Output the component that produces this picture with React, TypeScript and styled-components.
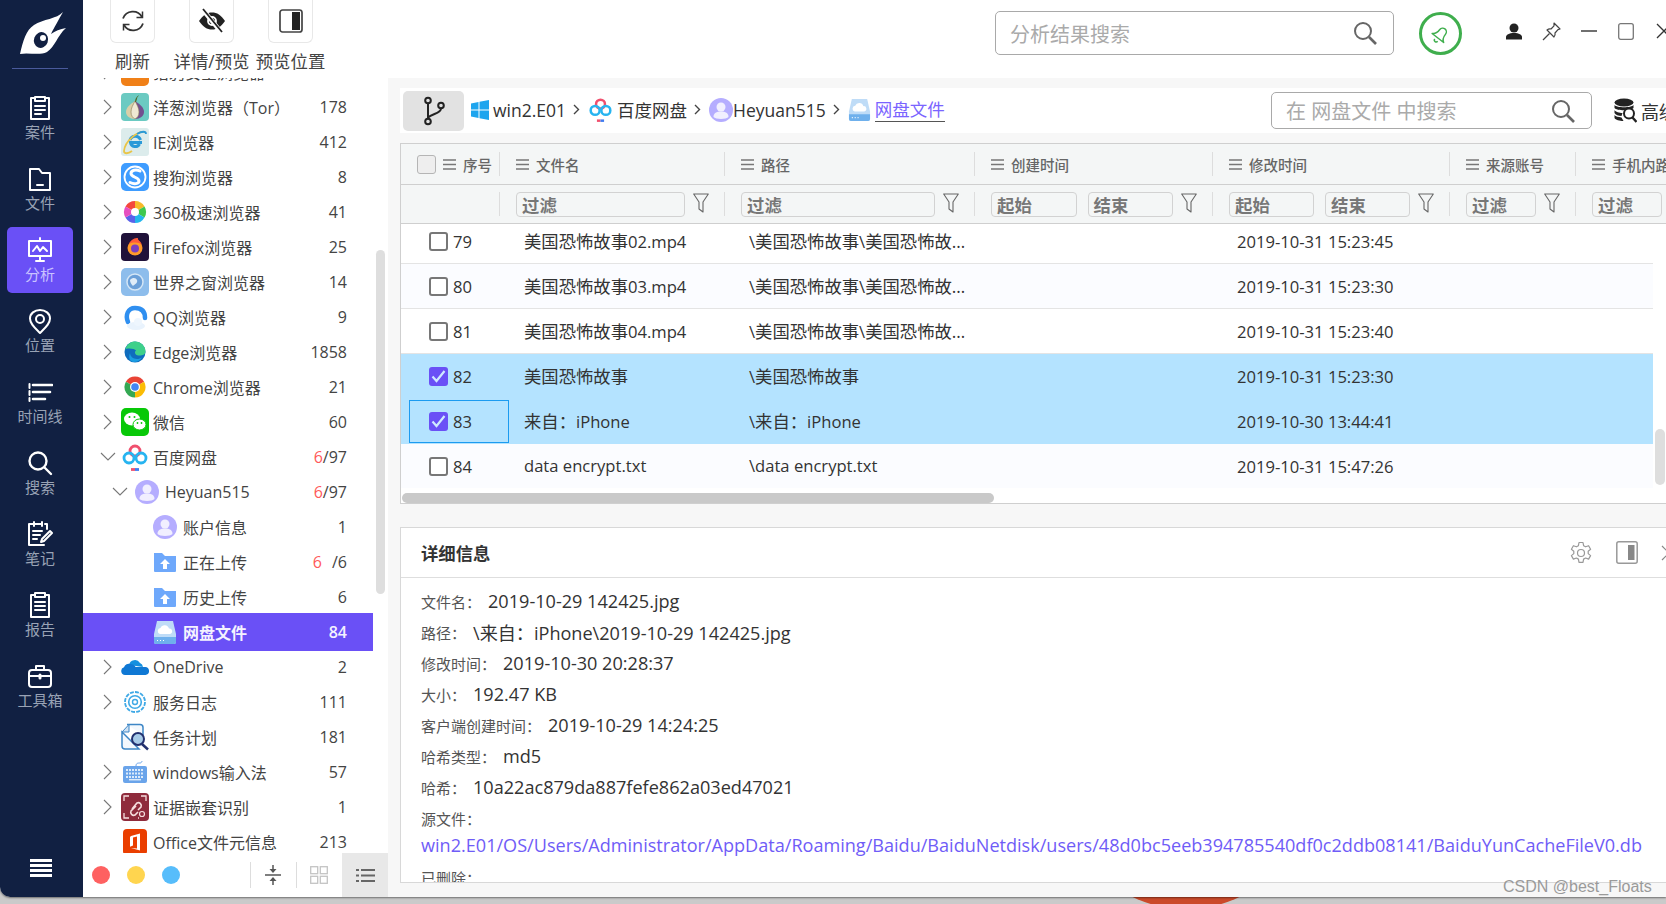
import React from "react";
import styled, { createGlobalStyle } from "styled-components";

const Global = createGlobalStyle`
  html, body { margin: 0; padding: 0; width: 1666px; height: 904px; overflow: hidden; background: #cacaca; }
  body { font-family: "Open Sans", "Noto Sans CJK SC", sans-serif; color: #333; }
  #root { width: 1666px; height: 904px; }
  * { box-sizing: border-box; }
`;

const Page = styled.div`
  position: relative;
  width: 1666px;
  height: 904px;
  overflow: hidden;
  background: #cacaca;
`;
const BehindWindow = styled.div`
  position: absolute;
  left: 1059px;
  top: 655px;
  width: 254px;
  height: 254px;
  border-radius: 50%;
  background: #cb4a2a;
`;
const Window = styled.div`
  position: relative;
  display: flex;
  width: 1666px;
  height: 897px;
  background: #fff;
  border-bottom-left-radius: 10px;
  box-shadow: 0 1px 2px rgba(0, 0, 0, 0.45);
  overflow: hidden;
`;
const Rail = styled.nav`
  flex: none;
  width: 83px;
  display: flex;
  flex-direction: column;
  background: #112042;
`;
const LogoBox = styled.div`
  width: 83px;
  height: 69px;
  display: flex;
  justify-content: center;
  padding-top: 11px;
  position: relative;
  &::after {
    content: "";
    position: absolute;
    left: 12px;
    right: 15px;
    bottom: 0;
    height: 1px;
    background: #4a5a9c;
  }
`;
const RailList = styled.div`
  display: flex;
  flex-direction: column;
  gap: 5px;
  padding: 16px 0 0 7px;
`;
const RailItem = styled.div<{ $active?: boolean }>`
  width: 66px;
  height: 66px;
  border-radius: 5px;
  display: flex;
  flex-direction: column;
  align-items: center;
  justify-content: center;
  gap: 2px;
  font-size: 15px;
  line-height: 19px;
  color: ${(p) => (p.$active ? "#c9c2ff" : "#99a3b5")};
  background: ${(p) => (p.$active ? "#6a50f6" : "transparent")};
`;
const Burger = styled.div`
  margin: auto 0 20px 30px;
  width: 22px;
  height: 18px;
  display: flex;
  flex-direction: column;
  justify-content: space-between;
  & > i {
    display: block;
    height: 3px;
    background: #fff;
  }
`;
const Content = styled.div`
  flex: 1;
  min-width: 0;
  display: flex;
  flex-direction: column;
`;
const TopBar = styled.header`
  flex: none;
  height: 78px;
  display: flex;
  padding-left: 10px;
  background: #fff;
`;
const ToolItem = styled.div`
  flex: none;
  width: 79px;
  display: flex;
  flex-direction: column;
  align-items: center;
  font-size: 17.4px;
  line-height: 24px;
  color: #444;
  white-space: nowrap;
`;
const ToolButton = styled.div`
  width: 45px;
  height: 43px;
  margin-bottom: 6px;
  border: 1px solid #e8e8e8;
  border-top: none;
  border-radius: 0 0 6px 6px;
  display: flex;
  align-items: center;
  justify-content: center;
`;
const TopSearch = styled.div`
  flex: none;
  margin: 11px 0 0 665px;
  width: 399px;
  height: 44px;
  border: 1px solid #a9a9a9;
  border-radius: 5px;
  display: flex;
  align-items: center;
  justify-content: space-between;
  padding: 0 16px 0 14px;
  font-size: 20px;
  color: #aaa;
`;
const BellCircle = styled.div`
  flex: none;
  margin: 12px 0 0 25px;
  width: 43px;
  height: 43px;
  border-radius: 50%;
  border: 3px solid #3fae4d;
  display: flex;
  align-items: center;
  justify-content: center;
`;
const WinControls = styled.div`
  flex: none;
  margin: 12px 0 0 33px;
  height: 38px;
  display: flex;
`;
const WinSlot = styled.div`
  flex: none;
  width: 37.5px;
  display: flex;
  align-items: center;
  justify-content: center;
`;
const Body = styled.div`
  flex: 1;
  min-height: 0;
  display: flex;
`;
const TreePanel = styled.aside`
  position: relative;
  flex: none;
  width: 305px;
  display: flex;
  flex-direction: column;
  background: #fff;
`;
const TreeList = styled.div`
  flex: 1;
  min-height: 0;
  overflow: hidden;
  width: 290px;
`;
const TreeTopClip = styled.div`
  margin-top: -23.5px;
`;
const TreeRow = styled.div<{ $level: number; $selected?: boolean }>`
  height: ${(p) => (p.$selected ? 38 : 35)}px;
  margin: ${(p) => (p.$selected ? "-1.5px 0" : "0")};
  display: flex;
  align-items: center;
  padding-left: ${(p) => [20, 32, 70][p.$level]}px;
  padding-right: 26px;
  padding-bottom: 1px;
  font-size: 16px;
  color: ${(p) => (p.$selected ? "#f4f2ff" : "#444")};
  font-weight: ${(p) => (p.$selected ? 600 : 400)};
  background: ${(p) => (p.$selected ? "#6a50f6" : "transparent")};
  position: relative;
`;
const Chevron = styled.span<{ $level: number }>`
  flex: none;
  width: ${(p) => (p.$level === 0 ? 18 : p.$level === 1 ? 20 : 0)}px;
  display: flex;
  align-items: center;
`;
const OpenChevron = styled.svg`
  margin-left: -3px;
`;
const IconSlot = styled.span<{ $small?: boolean }>`
  flex: none;
  width: ${(p) => (p.$small ? 24 : 28)}px;
  height: ${(p) => (p.$small ? 24 : 28)}px;
  margin-right: ${(p) => (p.$small ? 6 : 4)}px;
  display: flex;
`;
const TreeLabel = styled.span`
  flex: 1;
  white-space: nowrap;
`;
const Count = styled.span`
  flex: none;
  font-size: 16px;
`;
const Red = styled.span<{ $gap?: boolean }>`
  color: #ff5a5a;
  margin-right: ${(p) => (p.$gap ? 10 : 0)}px;
`;
const TreeThumb = styled.div`
  position: absolute;
  left: 293px;
  top: 172px;
  width: 9px;
  height: 344px;
  border-radius: 5px;
  background: #dedede;
`;
const TreeFooter = styled.div`
  flex: none;
  height: 44px;
  display: flex;
  align-items: center;
  padding-left: 9px;
`;
const Dot = styled.span<{ $c: string }>`
  flex: none;
  width: 18px;
  height: 18px;
  border-radius: 50%;
  margin-right: 17px;
  background: ${(p) => p.$c};
`;
const FooterTool = styled.div<{ $active?: boolean; $sep?: boolean }>`
  flex: none;
  height: 44px;
  width: 46px;
  display: flex;
  align-items: center;
  justify-content: center;
  position: relative;
  background: ${(p) => (p.$active ? "#e8e8e8" : "transparent")};
  ${(p) =>
    p.$sep
      ? `&::before { content: ""; position: absolute; left: 0; top: 9px; bottom: 9px; width: 1px; background: #ddd; }`
      : ""}
`;
const FooterSpacer = styled.div`
  width: 53px;
`;
const Main = styled.main`
  flex: none;
  width: 1278px;
  padding: 10px 0 14px 12px;
  display: flex;
  flex-direction: column;
  background: #f7f7f7;
`;
const CrumbBar = styled.div`
  flex: none;
  height: 45px;
  display: flex;
  align-items: center;
  background: #fff;
  white-space: nowrap;
`;
const Crumbs = styled.div`
  flex: none;
  width: 871px;
  padding: 0 0 2px 3px;
  display: flex;
  align-items: center;
  font-size: 17.5px;
  color: #333;
`;
const BranchButton = styled.div`
  flex: none;
  width: 61px;
  height: 40px;
  margin: 2px 7px 0 0;
  border-radius: 5px;
  background: #e2e2e2;
  display: flex;
  align-items: center;
  justify-content: center;
`;
const CrumbSep = styled.span`
  display: flex;
  margin: 0 8px 0 7px;
`;
const CrumbIcon = styled.span`
  display: flex;
  margin-right: 4px;
`;
const CrumbLink = styled.span`
  color: #7a64ff;
  border-bottom: 1px solid #555;
  line-height: 24px;
`;
const CrumbSearch = styled.div`
  flex: none;
  width: 321px;
  height: 37px;
  border: 1px solid #a9a9a9;
  border-radius: 5px;
  display: flex;
  align-items: center;
  justify-content: space-between;
  padding: 0 16px 0 14px;
  font-size: 20px;
  color: #aaa;
`;
const Advanced = styled.div`
  flex: none;
  margin-left: 22px;
  display: flex;
  align-items: center;
  gap: 4px;
  font-size: 18px;
  color: #333;
`;
const Table = styled.section`
  position: relative;
  flex: none;
  height: 361px;
  margin-top: 10px;
  background: #fff;
  border: 1px solid #cfcfcf;
  border-right: none;
  overflow: hidden;
`;
const gridCols = "99px 225px 250px 238px 237px 126px 126px";
const HeaderRow = styled.div`
  display: grid;
  grid-template-columns: ${gridCols};
  height: 41px;
  background: #f4f6f6;
  border-bottom: 1px solid #cfcfcf;
  font-size: 14.5px;
  font-weight: 500;
  color: #666;
  white-space: nowrap;
`;
const FilterRow = styled.div`
  display: grid;
  grid-template-columns: ${gridCols};
  height: 39px;
  background: #f4f6f6;
  border-bottom: 1px solid #cfcfcf;
`;
const HeadCell = styled.div`
  position: relative;
  display: flex;
  align-items: center;
  gap: 7px;
  padding-left: 16px;
  &::after {
    content: "";
    position: absolute;
    right: 0;
    top: 8px;
    height: 24px;
    width: 1px;
    background: #ddd;
  }
`;
const FilterCell = styled.div`
  position: relative;
  display: flex;
  align-items: center;
  gap: 8px;
  padding: 0 16px;
  &::after {
    content: "";
    position: absolute;
    right: 0;
    top: 7px;
    height: 24px;
    width: 1px;
    background: #ddd;
  }
`;
const FilterBox = styled.div`
  flex: 1;
  min-width: 0;
  height: 25px;
  border: 1px solid #d2d2d2;
  border-radius: 4px;
  padding-left: 5px;
  display: flex;
  align-items: center;
  font-size: 17.4px;
  font-weight: 700;
  color: #777;
  & + & {
    margin-left: 3px;
  }
`;
const HeadCheck = styled.span`
  flex: none;
  width: 19px;
  height: 19px;
  border-radius: 3px;
  border: 1px solid #b5b5b5;
  background: #eeeeee;
`;
const RowsClip = styled.div`
  width: 1252px;
  height: 264px;
  overflow: hidden;
`;
const RowsInner = styled.div`
  margin-top: -5px;
`;
const DataRow = styled.div<{ $selected?: boolean; $alt?: boolean }>`
  display: grid;
  grid-template-columns: ${gridCols};
  height: 45px;
  align-items: center;
  font-size: 17.33px;
  color: #333;
  white-space: nowrap;
  background: ${(p) => (p.$selected ? "#b4e3ff" : p.$alt ? "#fbfcff" : "#fff")};
  border-bottom: 1px solid ${(p) => (p.$selected ? "#b4e3ff" : "#e4e4e4")};
`;
const IndexCell = styled.div<{ $focus?: boolean }>`
  display: flex;
  align-items: center;
  gap: 5px;
  height: 43px;
  padding-left: ${(p) => (p.$focus ? 19 : 28)}px;
  margin-left: ${(p) => (p.$focus ? 8 : 0)}px;
  width: ${(p) => (p.$focus ? "100px" : "auto")};
  border: ${(p) => (p.$focus ? "1px solid #1c9bf0" : "none")};
`;
const Check = styled.span<{ $on?: boolean }>`
  flex: none;
  width: 19px;
  height: 19px;
  border-radius: 3px;
  display: flex;
  align-items: center;
  justify-content: center;
  border: ${(p) => (p.$on ? "none" : "2px solid #777")};
  background: ${(p) => (p.$on ? "#6a50f6" : "#fff")};
`;
const Cell = styled.div`
  padding: 0 5px 2px 24px;
  overflow: hidden;
  text-overflow: ellipsis;
`;
const TimeCell = styled(Cell)`
  padding-bottom: 0;
`;
const Latin = styled.span`
  font-size: 16.6px;
`;
const HScroll = styled.div`
  height: 15px;
  padding: 5px 0 0 1px;
`;
const HThumb = styled.div`
  width: 592px;
  height: 10px;
  border-radius: 5px;
  background: #c9c9c9;
`;
const VThumb = styled.div`
  position: absolute;
  left: 1254px;
  top: 285px;
  width: 10px;
  height: 56px;
  border-radius: 5px;
  background: #dedede;
`;
const Detail = styled.section`
  flex: 1;
  min-height: 0;
  margin-top: 23px;
  background: #fff;
  border: 1px solid #d8d8d8;
  border-right: none;
  overflow: hidden;
`;
const DetailHead = styled.div`
  height: 50px;
  border-bottom: 1px solid #dedede;
  display: flex;
  align-items: center;
  padding-left: 20px;
  font-size: 17.33px;
  font-weight: 700;
  color: #333;
`;
const DetailActions = styled.div`
  margin-left: auto;
  margin-right: -11px;
  display: flex;
  align-items: center;
  gap: 23px;
`;
const DetailBody = styled.div`
  padding: 7.5px 0 0 20px;
`;
const InfoLine = styled.div`
  height: 31px;
  display: flex;
  align-items: center;
  gap: 7px;
  white-space: nowrap;
  font-size: 18.1px;
  color: #333;
`;
const InfoLabel = styled.span`
  font-size: 15px;
  color: #555;
`;
const PathLink = styled.div`
  height: 25px;
  line-height: 25px;
  margin: -1px 0 4px;
  font-size: 18.08px;
  white-space: nowrap;
  color: #6f5cf7;
`;
const Watermark = styled.div`
  position: absolute;
  left: 1503px;
  top: 877px;
  font-family: "Liberation Sans", sans-serif;
  font-size: 16px;
  line-height: 20px;
  color: #9a9a9a;
  white-space: nowrap;
`;
const FunnelSvg = styled.svg`
  flex: none;
  margin-top: -3px;
`;

type SvgP = React.SVGProps<SVGSVGElement>;
const Railsvg = (p: SvgP) => (
  <svg width="26" height="26" viewBox="0 0 26 26" fill="none" stroke="#fff" strokeWidth="2" strokeLinecap="round" strokeLinejoin="round" {...p} />
);

const Logo = () => (
  <svg width="50" height="46" viewBox="0 0 50 46">
    <path
      fill="#fff"
      d="M46 1 C40 8 26 8 17 14 C9 19 6 30 3 43 C12 41 22 45 30 41 C38 36 40 25 49 17 C43 18 38 20 34 23 C37 17 42 8 46 1Z"
    />
    <ellipse cx="24" cy="29" rx="7" ry="8" transform="rotate(20 24 29)" fill="#112042" />
    <circle cx="26" cy="27" r="3" fill="#fff" />
  </svg>
);

const railIcons: Record<string, React.ReactNode> = {
  case: (
    <Railsvg>
      <path d="M8 3H4v21h18V3h-4" />
      <path d="M8 2h10v4H8z" />
      <path d="M8 11h10M8 15h10M8 19h6" />
    </Railsvg>
  ),
  file: (
    <Railsvg>
      <path d="M3 3h9l3 4h8v17H3z" />
      <path d="M10 19h6" />
    </Railsvg>
  ),
  analyse: (
    <Railsvg>
      <path d="M2 4h22v15H2z" />
      <path d="M13 1v3M13 19v4M9 24h8" />
      <path d="M6 14l4-5 3 5 3-4 4 4" />
    </Railsvg>
  ),
  location: (
    <Railsvg>
      <path d="M13 25C8 20 3 16 3 10.5 3 5.5 7.5 2 13 2s10 3.500 10 8.500C23 16 18 20 13 25z" />
      <circle cx="13" cy="11" r="4" />
    </Railsvg>
  ),
  timeline: (
    <Railsvg strokeWidth="2.6">
      <path d="M2.500 5v17" strokeWidth="2" strokeDasharray="4 3" />
      <path d="M6 6h19M6 13h17M6 20h12" />
    </Railsvg>
  ),
  search: (
    <Railsvg strokeWidth="2.4">
      <circle cx="11" cy="11" r="8.500" />
      <path d="M17.500 17.500L24 24" />
    </Railsvg>
  ),
  note: (
    <Railsvg>
      <path d="M7 3H2v21h15" />
      <path d="M7 1v4M15 1v4M7 3h8M18 3h2v5" />
      <path d="M6 10h9M6 14h7M6 18h4" />
      <path d="M14 21l1-3 8-8 2 2-8 8z" />
    </Railsvg>
  ),
  report: (
    <Railsvg>
      <path d="M8 3H4v22h18V3h-4" />
      <path d="M8 1h10v4H8z" />
      <path d="M8 10h10M8 14h10M8 18h10" />
    </Railsvg>
  ),
  tools: (
    <Railsvg>
      <rect x="2" y="7" width="22" height="17" rx="3" />
      <path d="M9 7V3h8v4M2 13h22" />
      <path d="M13 12v3" strokeWidth="3" />
    </Railsvg>
  ),
};

const Chev = ({ open }: { open?: boolean }) =>
  open ? (
    <OpenChevron width="16" height="9" viewBox="0 0 16 9" fill="none" stroke="#777" strokeWidth="1.100">
      <path d="M1 1l7 7 7-7" />
    </OpenChevron>
  ) : (
    <svg width="9" height="16" viewBox="0 0 9 16" fill="none" stroke="#777" strokeWidth="1.100">
      <path d="M1 1l7 7-7 7" />
    </svg>
  );

const wedge = (cx: number, cy: number, r: number, a0: number, a1: number) => {
  const rad = (d: number) => (d * Math.PI) / 180;
  const x0 = cx + r * Math.cos(rad(a0));
  const y0 = cy + r * Math.sin(rad(a0));
  const x1 = cx + r * Math.cos(rad(a1));
  const y1 = cy + r * Math.sin(rad(a1));
  return `M${cx} ${cy}L${x0} ${y0}A${r} ${r} 0 0 1 ${x1} ${y1}Z`;
};

const Avatar = ({ size = 24 }: { size?: number }) => (
  <svg width={size} height={size} viewBox="0 0 24 24">
    <circle cx="12" cy="12" r="12" fill="#b5adff" />
    <circle cx="12" cy="9" r="4.500" fill="#f1efff" />
    <path d="M4.500 19c0-4 3-5.500 7.500-5.500S19.500 15 19.500 19c-2 2.500-13 2.500-15 0z" fill="#f1efff" />
  </svg>
);
const BaiduIcon = ({ size = 28 }: { size?: number }) => (
  <svg width={size} height={size} viewBox="0 0 28 28" fill="none" strokeWidth="2.800">
    <circle cx="14" cy="8" r="5" stroke="#f0506e" />
    <circle cx="8" cy="15" r="5" stroke="#27b4f0" />
    <circle cx="20" cy="15" r="5" stroke="#27b4f0" />
    <path d="M10 26.500h4" stroke="#f0506e" />
    <path d="M14 26.500h4" stroke="#3f7cf0" />
  </svg>
);
const DiskIcon = ({ size = 24 }: { size?: number }) => (
  <svg width={size} height={size} viewBox="0 0 24 24">
    <path d="M4 1h16l3 13v8a2 2 0 0 1-2 2H3a2 2 0 0 1-2-2v-8z" fill="#bfdcf7" />
    <path d="M1 17h22v5a2 2 0 0 1-2 2H3a2 2 0 0 1-2-2z" fill="#6fb0ec" />
    <path d="M7 14a3 3 0 0 1 .5-5.900A4.500 4.500 0 0 1 16 8.500 2.800 2.800 0 0 1 17 14z" fill="#fff" />
    <path d="M4 20.500h1M7 20.500h1M10 20.500h1" stroke="#fff" strokeWidth="1.200" />
  </svg>
);

const AppIcon = ({ kind }: { kind: string }) => {
  const s = { width: 28, height: 28, viewBox: "0 0 28 28" };
  switch (kind) {
    case "orange":
      return (
        <svg {...s}>
          <rect width="28" height="28" rx="5" fill="#f08018" />
        </svg>
      );
    case "tor":
      return (
        <svg {...s}>
          <rect width="28" height="28" rx="4" fill="#6bcac2" />
          <path d="M14 8C8 12 5 15 5 19c0 4 4 7 9 7z" fill="#d8cfa8" />
          <path d="M14 8c6 4 9 7 9 11 0 4-4 7-9 7z" fill="#71508f" />
          <path d="M14 8c-2 4-4 7-4 11s2 6 4 7c2-1 4-3 4-7s-2-7-4-11z" fill="#efe9d4" stroke="#8a7a55" strokeWidth=".6" />
          <path d="M14 9c0-3 1-5 4-7-1 2-2 2-2 4l-1 3z" fill="#4f6b2a" />
        </svg>
      );
    case "ie":
      return (
        <svg {...s}>
          <rect width="28" height="28" rx="3" fill="#dcecec" />
          <path d="M21 14.500H9.500a4.800 4.800 0 0 0 9 1.500" fill="none" stroke="#2a9ad8" strokeWidth="3" />
          <path d="M9 12a5.500 5.500 0 0 1 10.500 0" fill="none" stroke="#2a9ad8" strokeWidth="3" />
          <path d="M24 4C16 3 4 13 3 23c0 3 4 3 8 0" fill="none" stroke="#e9c548" strokeWidth="1.800" />
          <path d="M16 6c5-3 9-3 9 0" fill="none" stroke="#2a9ad8" strokeWidth="1.800" />
        </svg>
      );
    case "sogou":
      return (
        <svg {...s}>
          <rect width="28" height="28" rx="5" fill="#3e9cff" />
          <circle cx="14" cy="14" r="10.500" fill="none" stroke="#fff" strokeWidth="1.800" />
          <path d="M19 8c-4-2-9-1-9 2.500 0 4 8 3.500 8 7.500 0 3-5 3.500-9 1.500" fill="none" stroke="#fff" strokeWidth="3" strokeLinecap="round" />
        </svg>
      );
    case "360": {
      const cols = ["#f4473c", "#f7b92a", "#3fc84f", "#23b6ec", "#5a62ea", "#e64fc0"];
      return (
        <svg {...s}>
          {cols.map((c, i) => (
            <path key={c} d={wedge(14, 14, 11, -150 + i * 60, -90 + i * 60)} fill={c} />
          ))}
          <circle cx="14" cy="14" r="4" fill="#fff" />
        </svg>
      );
    }
    case "firefox":
      return (
        <svg {...s}>
          <rect width="28" height="28" rx="4" fill="#20123a" />
          <circle cx="14" cy="15" r="7.500" fill="#ff9a2a" />
          <path d="M8 11c2-5 6-6 9-6-1 2 3 3 4 7-3-3-9-3-13-1z" fill="#ff5a3a" />
          <circle cx="14" cy="15.500" r="4" fill="#7a3fc0" />
        </svg>
      );
    case "world":
      return (
        <svg {...s}>
          <rect width="28" height="28" rx="5" fill="#8dbdec" />
          <circle cx="14" cy="14" r="8" fill="#6a9fd8" stroke="#d4e6f6" strokeWidth="1.500" />
          <path d="M9 12c3-3 6-2 7 0 1 3-2 4-4 6-2-2-3-4-3-6z" fill="#dfecf8" />
        </svg>
      );
    case "qq":
      return (
        <svg {...s}>
          <path d="M7 19C4 12 7 5 14 5s10 4 10 10" fill="none" stroke="#2f8ff0" strokeWidth="4.500" strokeLinecap="round" />
          <ellipse cx="15" cy="23" rx="9" ry="4" fill="#e9f3fd" />
          <circle cx="17" cy="19" r="4" fill="#eef6fe" />
        </svg>
      );
    case "edge":
      return (
        <svg {...s}>
          <circle cx="14" cy="14" r="10.500" fill="#0f6cbd" />
          <path d="M4 12C6 5 11 3.500 14 3.500c6 0 10.500 4.500 10.500 10 0 3-3 4-6 4-3.500 0-4.500-1.500-4.500-3 0-1 .5-1.500 1-2-1-2-10-3-11-.5z" fill="#3ed08a" />
          <path d="M9 15c0 3 3 6 7 6 2 0 3.500-.6 5-1.500-2 3-5 4.500-8 4.500-4 0-6-4-4-9z" fill="#1b9de2" />
        </svg>
      );
    case "chrome":
      return (
        <svg {...s}>
          <path d={wedge(14, 14, 10.500, 210, 330)} fill="#e94335" />
          <path d={wedge(14, 14, 10.500, 330, 450)} fill="#fbbc05" />
          <path d={wedge(14, 14, 10.500, 90, 210)} fill="#34a853" />
          <circle cx="14" cy="14" r="5" fill="#fff" />
          <circle cx="14" cy="14" r="3.800" fill="#4285f4" />
        </svg>
      );
    case "wechat":
      return (
        <svg {...s}>
          <rect width="28" height="28" rx="5" fill="#08c808" />
          <ellipse cx="11" cy="11" rx="8" ry="6.500" fill="#fff" />
          <ellipse cx="18.500" cy="16.500" rx="6.500" ry="5.500" fill="#fff" stroke="#08c808" />
          <circle cx="8.500" cy="9" r="1" fill="#08c808" />
          <circle cx="13.500" cy="9" r="1" fill="#08c808" />
          <circle cx="16.500" cy="15" r=".9" fill="#08c808" />
          <circle cx="20.500" cy="15" r=".9" fill="#08c808" />
        </svg>
      );
    case "baidu":
      return <BaiduIcon />;
    case "avatar":
      return <Avatar />;
    case "upload":
      return (
        <svg width="24" height="24" viewBox="0 0 24 24">
          <path d="M1 3h8l3 3h11v15a1 1 0 0 1-1 1H2a1 1 0 0 1-1-1z" fill="#6ea8fb" />
          <path d="M12 9l-5 5h3v5h4v-5h3z" fill="#fff" />
        </svg>
      );
    case "disk":
      return <DiskIcon />;
    case "onedrive":
      return (
        <svg {...s}>
          <path d="M8 12a6 6 0 0 1 11-2 5 5 0 0 1 3 4z" fill="#1490df" />
          <path d="M4 22a4 4 0 0 1-1-7.800A5 5 0 0 1 9.500 11c4 0 5 3 5 3l9 0a4 4 0 0 1 1 8z" fill="#0f78d4" />
        </svg>
      );
    case "service":
      return (
        <svg {...s} fill="none" stroke="#3fa9e6">
          <circle cx="14" cy="14" r="10" strokeWidth="1.800" strokeDasharray="4 1.200" />
          <circle cx="14" cy="14" r="6.300" strokeWidth="1.600" />
          <circle cx="14" cy="14" r="2.500" strokeWidth="1.400" />
        </svg>
      );
    case "task":
      return (
        <svg {...s}>
          <path d="M6 1.500h13a3 3 0 0 1 3 3V12M18 26H4a3 3 0 0 1-3-3V9z" fill="#f3f8fd" stroke="#3d86c6" strokeWidth="1.500" />
          <path d="M1 9l7-7.500V9z" fill="#cfe2f4" stroke="#3d86c6" strokeWidth="1" />
          <circle cx="17" cy="16" r="6" fill="#a7cbe8" stroke="#22306e" strokeWidth="2" />
          <path d="M21 21l6 5.500" stroke="#22306e" strokeWidth="2.500" />
        </svg>
      );
    case "keyboard":
      return (
        <svg {...s}>
          <rect x="2" y="8" width="24" height="17" rx="2" fill="#6aa4ea" />
          <path d="M5 12h18M5 15.500h18M5 19h18" stroke="#dcebfb" strokeWidth="1.800" strokeDasharray="2 1" />
          <path d="M8 21.700h12" stroke="#dcebfb" strokeWidth="1.500" />
          <path d="M15 8c0-3 2-3 4-3 1 0 2-1 2-2" fill="none" stroke="#6aa4ea" />
        </svg>
      );
    case "evidence":
      return (
        <svg {...s}>
          <rect width="28" height="28" rx="4" fill="#8f2b3c" />
          <path d="M3 8V3h5M20 3h5v5M3 20v5h5M17 25h1" fill="none" stroke="#f6dede" strokeWidth="1.300" />
          <path d="M11 16l5-6a3 3 0 0 1 4 4l-3 3M15 13l-5 5a3 3 0 0 0 4 4l3-3" fill="none" stroke="#f6dede" strokeWidth="1.600" />
          <circle cx="21" cy="21" r="2.500" fill="none" stroke="#f6dede" strokeWidth="1.200" />
        </svg>
      );
    case "office":
      return (
        <svg {...s}>
          <rect x="2" y="1" width="24" height="26" rx="4" fill="#ea3e00" />
          <path d="M10 8l9-2.500v17L10 20l6 .6V8.500L12 9.500v8L9 18.700V9z" fill="#fff" />
        </svg>
      );
    default:
      return null;
  }
};

type TreeItem = {
  label: string;
  kind: string;
  level: number;
  count?: string;
  red?: string;
  gap?: boolean;
  chevron?: "open" | "closed";
  selected?: boolean;
};
const tree: TreeItem[] = [
  { label: "猎豹安全浏览器", kind: "orange", level: 0, chevron: "closed" },
  { label: "洋葱浏览器（Tor）", kind: "tor", level: 0, count: "178", chevron: "closed" },
  { label: "IE浏览器", kind: "ie", level: 0, count: "412", chevron: "closed" },
  { label: "搜狗浏览器", kind: "sogou", level: 0, count: "8", chevron: "closed" },
  { label: "360极速浏览器", kind: "360", level: 0, count: "41", chevron: "closed" },
  { label: "Firefox浏览器", kind: "firefox", level: 0, count: "25", chevron: "closed" },
  { label: "世界之窗浏览器", kind: "world", level: 0, count: "14", chevron: "closed" },
  { label: "QQ浏览器", kind: "qq", level: 0, count: "9", chevron: "closed" },
  { label: "Edge浏览器", kind: "edge", level: 0, count: "1858", chevron: "closed" },
  { label: "Chrome浏览器", kind: "chrome", level: 0, count: "21", chevron: "closed" },
  { label: "微信", kind: "wechat", level: 0, count: "60", chevron: "closed" },
  { label: "百度网盘", kind: "baidu", level: 0, red: "6", count: "/97", chevron: "open" },
  { label: "Heyuan515", kind: "avatar", level: 1, red: "6", count: "/97", chevron: "open" },
  { label: "账户信息", kind: "avatar", level: 2, count: "1" },
  { label: "正在上传", kind: "upload", level: 2, red: "6", gap: true, count: "/6" },
  { label: "历史上传", kind: "upload", level: 2, count: "6" },
  { label: "网盘文件", kind: "disk", level: 2, count: "84", selected: true },
  { label: "OneDrive", kind: "onedrive", level: 0, count: "2", chevron: "closed" },
  { label: "服务日志", kind: "service", level: 0, count: "111", chevron: "closed" },
  { label: "任务计划", kind: "task", level: 0, count: "181" },
  { label: "windows输入法", kind: "keyboard", level: 0, count: "57", chevron: "closed" },
  { label: "证据嵌套识别", kind: "evidence", level: 0, count: "1", chevron: "closed" },
  { label: "Office文件元信息", kind: "office", level: 0, count: "213" },
];

const rails: [string, string][] = [
  ["case", "案件"],
  ["file", "文件"],
  ["analyse", "分析"],
  ["location", "位置"],
  ["timeline", "时间线"],
  ["search", "搜索"],
  ["note", "笔记"],
  ["report", "报告"],
  ["tools", "工具箱"],
];

const rows = [
  { n: "79", name: "美国恐怖故事02.mp4", path: "\\美国恐怖故事\\美国恐怖故事02.mp4", time: "2019-10-31 15:23:45" },
  { n: "80", name: "美国恐怖故事03.mp4", path: "\\美国恐怖故事\\美国恐怖故事03.mp4", time: "2019-10-31 15:23:30", alt: true },
  { n: "81", name: "美国恐怖故事04.mp4", path: "\\美国恐怖故事\\美国恐怖故事04.mp4", time: "2019-10-31 15:23:40" },
  { n: "82", name: "美国恐怖故事", path: "\\美国恐怖故事", time: "2019-10-31 15:23:30", selected: true },
  { n: "83", name: "来自：iPhone", path: "\\来自：iPhone", time: "2019-10-30 13:44:41", selected: true, focus: true },
  { n: "84", name: "data encrypt.txt", path: "\\data encrypt.txt", time: "2019-10-31 15:47:26", alt: true },
];

const info: [string, string][] = [
  ["文件名：", "2019-10-29 142425.jpg"],
  ["路径：", "\\来自：iPhone\\2019-10-29 142425.jpg"],
  ["修改时间：", "2019-10-30 20:28:37"],
  ["大小：", "192.47 KB"],
  ["客户端创建时间：", "2019-10-29 14:24:25"],
  ["哈希类型：", "md5"],
  ["哈希：", "10a22ac879da887fefe862a03ed47021"],
];

const mixed = (s: string) =>
  s.split(/([\x00-\x7f]+)/).map((part, i) => (i % 2 ? <Latin key={i}>{part}</Latin> : part));

const Magnifier = ({ size = 24, color = "#666" }: { size?: number; color?: string }) => (
  <svg width={size} height={size} viewBox="0 0 24 24" fill="none" stroke={color} strokeWidth="2">
    <circle cx="10" cy="10" r="8" />
    <path d="M16 16l7 7" strokeWidth="2.600" />
  </svg>
);
const MenuMark = () => (
  <svg width="13" height="11" viewBox="0 0 13 11" fill="none" stroke="#777" strokeWidth="1.300">
    <path d="M0 1h13M0 5.500h13M0 10h13" />
  </svg>
);
const Funnel = () => (
  <FunnelSvg width="16" height="20" viewBox="0 0 16 20" fill="none" stroke="#666" strokeWidth="1.100" strokeLinejoin="round">
    <path d="M.7 1h14.600L10 9v10l-4-3V9z" />
  </FunnelSvg>
);
const CrumbArrow = () => (
  <CrumbSep>
    <svg width="7" height="11" viewBox="0 0 7 11" fill="none" stroke="#444" strokeWidth="1.400">
      <path d="M1 1l4.500 4.500L1 10" />
    </svg>
  </CrumbSep>
);
const HeadLabel = ({ text }: { text: string }) => (
  <HeadCell>
    <MenuMark />
    <span>{text}</span>
  </HeadCell>
);
const CheckMark = () => (
  <svg width="15" height="13" viewBox="0 0 15 13" fill="none" stroke="#cfe9ff" strokeWidth="2.200">
    <path d="M1.500 6.500l4 4.500 8-10" />
  </svg>
);

export default function App() {
  return (
    <Page>
      <Global />
      <BehindWindow />
      <Window>
        <Rail>
          <LogoBox>
            <Logo />
          </LogoBox>
          <RailList>
            {rails.map(([k, label]) => (
              <RailItem key={k} $active={k === "analyse"}>
                {railIcons[k]}
                <span>{label}</span>
              </RailItem>
            ))}
          </RailList>
          <Burger>
            <i />
            <i />
            <i />
            <i />
          </Burger>
        </Rail>
        <Content>
          <TopBar>
            <ToolItem>
              <ToolButton>
                <svg width="26" height="26" viewBox="0 0 26 26" fill="none" stroke="#333" strokeWidth="1.800">
                  <path d="M3 10.500A10.500 10.500 0 0 1 22 9" />
                  <path d="M23 15.500A10.500 10.500 0 0 1 4 17" />
                  <path d="M22.500 3.500V9.500h-6M3.500 22.500v-6h6" strokeWidth="1.500" />
                </svg>
              </ToolButton>
              刷新
            </ToolItem>
            <ToolItem>
              <ToolButton>
                <svg width="28" height="26" viewBox="0 0 28 26">
                  <path d="M1 13C5 7 9 4.500 14 4.500S23 7 27 13c-4 6-8 8.500-13 8.500S5 19 1 13z" fill="#222" />
                  <circle cx="14" cy="13" r="4" fill="none" stroke="#fff" strokeWidth="1.800" />
                  <path d="M5 2l18 22" stroke="#fff" strokeWidth="4.500" />
                  <path d="M5 1l19 23" stroke="#222" strokeWidth="1.800" />
                </svg>
              </ToolButton>
              详情/预览
            </ToolItem>
            <ToolItem>
              <ToolButton>
                <svg width="24" height="24" viewBox="0 0 24 24">
                  <rect x="1" y="1" width="22" height="22" rx="2.500" fill="none" stroke="#444" strokeWidth="1.700" />
                  <rect x="13" y="3" width="8" height="18" fill="#222" />
                </svg>
              </ToolButton>
              预览位置
            </ToolItem>
            <TopSearch>
              <span>分析结果搜索</span>
              <Magnifier size={24} />
            </TopSearch>
            <BellCircle>
              <svg width="22" height="22" viewBox="0 0 24 24" fill="none" stroke="#3fae4d" strokeWidth="1.600" strokeLinejoin="round">
                <g transform="rotate(38 12 12)">
                  <path d="M8 9a4 4 0 0 1 8 0c0 5 1 7 4 8.500H4C7 16 8 14 8 9z" />
                  <path d="M10 20.500a2 2 0 0 0 4 0" />
                </g>
              </svg>
            </BellCircle>
            <WinControls>
              <WinSlot>
                <svg width="16" height="17" viewBox="0 0 16 17" fill="#222">
                  <circle cx="8" cy="5" r="4.500" />
                  <path d="M0 16.500v-2.500c0-2 3-4 8-4s8 2 8 4v2.500z" />
                </svg>
              </WinSlot>
              <WinSlot>
                <svg width="19" height="19" viewBox="0 0 19 19" fill="none" stroke="#444" strokeWidth="1.200" strokeLinejoin="round">
                  <path d="M12 1l6 6-2 .6-3 3.400c.5 2-.2 3-1 4L5 8c1-.8 2-1.500 4-1l3-3.200z" />
                  <path d="M7.500 11.500L1 18" />
                </svg>
              </WinSlot>
              <WinSlot>
                <svg width="16" height="2" viewBox="0 0 16 2">
                  <path d="M0 1h16" stroke="#333" strokeWidth="1.400" />
                </svg>
              </WinSlot>
              <WinSlot>
                <svg width="16" height="17" viewBox="0 0 16 17" fill="none">
                  <rect x=".7" y=".7" width="14.600" height="15.600" rx="2" stroke="#777" strokeWidth="1.300" />
                </svg>
              </WinSlot>
              <WinSlot>
                <svg width="16" height="16" viewBox="0 0 16 16" stroke="#333" strokeWidth="1.300">
                  <path d="M1 1l14 14M15 1L1 15" />
                </svg>
              </WinSlot>
            </WinControls>
          </TopBar>
          <Body>
            <TreePanel>
              <TreeList>
                <TreeTopClip>
                  {tree.map((t) => (
                    <TreeRow key={t.label} $level={t.level} $selected={t.selected}>
                      <Chevron $level={t.level}>
                        {t.chevron ? <Chev open={t.chevron === "open"} /> : null}
                      </Chevron>
                      <IconSlot $small={t.level > 0}>
                        <AppIcon kind={t.kind} />
                      </IconSlot>
                      <TreeLabel>{t.label}</TreeLabel>
                      <Count>
                        {t.red ? <Red $gap={t.gap}>{t.red}</Red> : null}
                        {t.count}
                      </Count>
                    </TreeRow>
                  ))}
                </TreeTopClip>
              </TreeList>
              <TreeThumb />
              <TreeFooter>
                <Dot $c="#fe6161" />
                <Dot $c="#ffd54f" />
                <Dot $c="#57bdfb" />
                <FooterSpacer />
                <FooterTool $sep>
                  <svg width="18" height="22" viewBox="0 0 18 22" stroke="#555" strokeWidth="1.500" fill="#555">
                    <path d="M1 11h16" fill="none" />
                    <path d="M9 1v7" fill="none" />
                    <path d="M5.500 5L9 9l3.500-4zM5.500 17L9 13l3.500 4z" stroke="none" />
                    <path d="M9 14v7" fill="none" />
                  </svg>
                </FooterTool>
                <FooterTool $sep>
                  <svg width="18" height="18" viewBox="0 0 18 18" fill="none" stroke="#c4c4c4" strokeWidth="1.300">
                    <rect x=".7" y=".7" width="7" height="7" />
                    <rect x="10.300" y=".7" width="7" height="7" />
                    <rect x=".7" y="10.300" width="7" height="7" />
                    <rect x="10.300" y="10.300" width="7" height="7" />
                  </svg>
                </FooterTool>
                <FooterTool $active>
                  <svg width="19" height="15" viewBox="0 0 19 15" stroke="#666" strokeWidth="2">
                    <path d="M0 2h3M5 2h14M0 7.500h3M5 7.500h14M0 13h3M5 13h14" />
                  </svg>
                </FooterTool>
              </TreeFooter>
            </TreePanel>
            <Main>
              <CrumbBar>
                <Crumbs>
                  <BranchButton>
                    <svg width="22" height="30" viewBox="0 0 22 30" fill="none" stroke="#222" strokeWidth="2">
                      <circle cx="5" cy="4.500" r="2.800" />
                      <circle cx="5" cy="25.500" r="2.800" />
                      <circle cx="18" cy="9.500" r="2.800" />
                      <path d="M5 7.500v15M18 12.500c0 5-9 5-13 9" />
                    </svg>
                  </BranchButton>
                  <CrumbIcon>
                    <svg width="18" height="20" viewBox="0 0 18 20" fill="#1ea5ee">
                      <path d="M0 3.500l7.500-1.500v7.500H0zM8.500 1.800L18 0v9.500H8.500zM0 10.500h7.500V18L0 16.500zM8.500 10.500H18V20l-9.500-1.800z" />
                    </svg>
                  </CrumbIcon>
                  <span>win2.E01</span>
                  <CrumbArrow />
                  <CrumbIcon>
                    <BaiduIcon size={25} />
                  </CrumbIcon>
                  <span>百度网盘</span>
                  <CrumbArrow />
                  <Avatar />
                  <span>Heyuan515</span>
                  <CrumbArrow />
                  <CrumbIcon>
                    <DiskIcon size={23} />
                  </CrumbIcon>
                  <CrumbLink>网盘文件</CrumbLink>
                </Crumbs>
                <CrumbSearch>
                  <span>在 网盘文件 中搜索</span>
                  <Magnifier size={24} />
                </CrumbSearch>
                <Advanced>
                  <svg width="23" height="25" viewBox="0 0 23 25">
                    <ellipse cx="10" cy="4.500" rx="9.500" ry="4" fill="#222" />
                    <path d="M.5 7c2 3 17 3 19 0v3c-2 3-17 3-19 0zM.5 12c1 2 5 3 8 3l-1 3c-3 0-6-1-7-3zM.5 17c1 1.500 4 2 7 2.500l2 3.500c-4 0-8-1-9-3z" fill="#222" />
                    <circle cx="15" cy="15.500" r="5" fill="#fff" stroke="#222" strokeWidth="2" />
                    <path d="M18.500 19.500l4 4.500" stroke="#222" strokeWidth="2.400" />
                  </svg>
                  <span>高级搜索</span>
                </Advanced>
              </CrumbBar>
              <Table>
                <HeaderRow>
                  <HeadCell>
                    <HeadCheck />
                    <MenuMark />
                    <span>序号</span>
                  </HeadCell>
                  <HeadLabel text="文件名" />
                  <HeadLabel text="路径" />
                  <HeadLabel text="创建时间" />
                  <HeadLabel text="修改时间" />
                  <HeadLabel text="来源账号" />
                  <HeadLabel text="手机内路径" />
                </HeaderRow>
                <FilterRow>
                  <FilterCell />
                  <FilterCell>
                    <FilterBox>过滤</FilterBox>
                    <Funnel />
                  </FilterCell>
                  <FilterCell>
                    <FilterBox>过滤</FilterBox>
                    <Funnel />
                  </FilterCell>
                  <FilterCell>
                    <FilterBox>起始</FilterBox>
                    <FilterBox>结束</FilterBox>
                    <Funnel />
                  </FilterCell>
                  <FilterCell>
                    <FilterBox>起始</FilterBox>
                    <FilterBox>结束</FilterBox>
                    <Funnel />
                  </FilterCell>
                  <FilterCell>
                    <FilterBox>过滤</FilterBox>
                    <Funnel />
                  </FilterCell>
                  <FilterCell>
                    <FilterBox>过滤</FilterBox>
                    <Funnel />
                  </FilterCell>
                </FilterRow>
                <RowsClip>
                  <RowsInner>
                    {rows.map((r) => (
                      <DataRow key={r.n} $selected={r.selected} $alt={r.alt}>
                        <IndexCell $focus={r.focus}>
                          <Check $on={r.selected}>{r.selected ? <CheckMark /> : null}</Check>
                          <Latin>{r.n}</Latin>
                        </IndexCell>
                        <Cell>{mixed(r.name)}</Cell>
                        <Cell>{mixed(r.path)}</Cell>
                        <Cell />
                        <TimeCell>{mixed(r.time)}</TimeCell>
                        <Cell />
                        <Cell />
                      </DataRow>
                    ))}
                  </RowsInner>
                </RowsClip>
                <HScroll>
                  <HThumb />
                </HScroll>
                <VThumb />
              </Table>
              <Detail>
                <DetailHead>
                  <span>详细信息</span>
                  <DetailActions>
                    <svg width="24" height="26" viewBox="0 0 24 24" fill="none" stroke="#999" strokeWidth="1.200" strokeLinejoin="round">
                      <circle cx="12" cy="12" r="3.500" />
                      <path d="M10 1.500h4l.6 3.200 2 1.100 3-1.100 2 3.500-2.400 2 0 2.400 2.400 2-2 3.500-3-1.100-2 1.100-.6 3.200h-4l-.6-3.200-2-1.100-3 1.100-2-3.500 2.400-2 0-2.400-2.400-2 2-3.500 3 1.100 2-1.100z" />
                    </svg>
                    <svg width="22" height="23" viewBox="0 0 22 23">
                      <rect x=".8" y=".8" width="20.400" height="21.400" rx="2" fill="none" stroke="#999" strokeWidth="1.500" />
                      <rect x="12" y="4" width="6.500" height="15" fill="#888" />
                    </svg>
                    <svg width="16" height="16" viewBox="0 0 16 16" stroke="#888" strokeWidth="1.200">
                      <path d="M1 1l14 14M15 1L1 15" />
                    </svg>
                  </DetailActions>
                </DetailHead>
                <DetailBody>
                  {info.map(([a, b]) => (
                    <InfoLine key={a}>
                      <InfoLabel>{a}</InfoLabel>
                      <span>{b}</span>
                    </InfoLine>
                  ))}
                  <InfoLine>
                    <InfoLabel>源文件：</InfoLabel>
                  </InfoLine>
                  <PathLink>
                    win2.E01/OS/Users/Administrator/AppData/Roaming/Baidu/BaiduNetdisk/users/48d0bc5eeb394785540df0c2ddb08141/BaiduYunCacheFileV0.db
                  </PathLink>
                  <InfoLine>
                    <InfoLabel>已删除：</InfoLabel>
                  </InfoLine>
                </DetailBody>
              </Detail>
            </Main>
          </Body>
        </Content>
      </Window>
      <Watermark>CSDN @best_Floats</Watermark>
    </Page>
  );
}
